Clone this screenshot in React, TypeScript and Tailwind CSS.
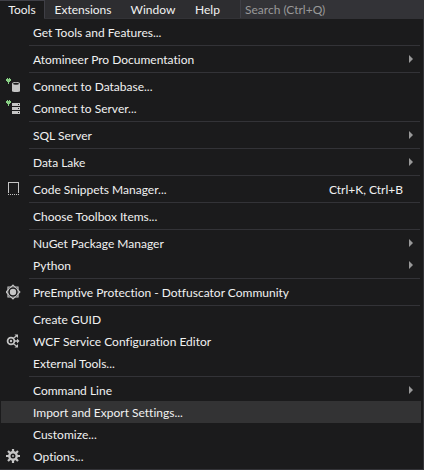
import type { ReactNode } from "react";

type Item = {
  label: string;
  icon?: ReactNode;
  shortcut?: string;
  submenu?: boolean;
  active?: boolean;
};

function PlugMark() {
  return (
    <path d="M1 0h1v1h1V0h1v1h1v2h-1v1h-1v2h-1V4h-1V3H0V1h1z" fill="#89d185" />
  );
}

function DatabaseIcon() {
  return (
    <svg width="16" height="16" viewBox="0 0 16 16" aria-hidden="true">
      <PlugMark />
      <path d="M6 5.500C6 4.600 7.500 4 10 4s4 .6 4 1.500V13c0 .6-1.500 1-4 1s-4-.4-4-1z" fill="#c5c5c5" />
      <ellipse cx="10" cy="5.800" rx="3" ry="1" fill="#1b1b1c" />
    </svg>
  );
}

function ServerIcon() {
  return (
    <svg width="16" height="16" viewBox="0 0 16 16" aria-hidden="true" shapeRendering="crispEdges">
      <PlugMark />
      <path d="M6 3h8v3H6zM6 7h8v3H6zM6 11h8v3H6z" fill="#c5c5c5" />
      <path d="M12 4h1v1h-1zM12 8h1v1h-1zM12 12h1v1h-1z" fill="#1b1b1c" />
    </svg>
  );
}

function SnippetIcon() {
  return (
    <svg width="16" height="16" viewBox="0 0 16 16" aria-hidden="true" shapeRendering="crispEdges">
      <path d="M2 12V1h11v11h-1V2H3v10z" fill="#c5c5c5" />
      <path d="M2 13h1v1H2zM4 13h1v1H4zM6 13h1v1H6zM8 13h1v1H8zM10 13h1v1h-1zM12 13h1v1h-1z" fill="#c5c5c5" />
    </svg>
  );
}

function DotfuscatorIcon() {
  return (
    <svg width="16" height="16" viewBox="0 0 16 16" fill="none" stroke="#c5c5c5" aria-hidden="true">
      <path d="M2 3h10v10H2z" strokeWidth="1.200" />
      <path d="M7 1.200L13.800 8 7 14.800.2 8z" strokeWidth="1.200" />
      <circle cx="7" cy="8" r="4.600" fill="#1b1b1c" stroke="none" />
      <circle cx="7" cy="8" r="3.200" fill="#c5c5c5" stroke="none" />
    </svg>
  );
}

function WcfIcon() {
  return (
    <svg width="16" height="16" viewBox="0 0 16 16" fill="none" stroke="#c5c5c5" aria-hidden="true">
      <circle cx="5" cy="8" r="3.400" strokeWidth="1.800" />
      <circle cx="5" cy="8" r="1.200" fill="#c5c5c5" stroke="none" />
      <path d="M8 8h4M7.500 5l3-2M7.500 11l3 2" strokeWidth="1.300" />
      <path d="M8.500 1.500H12V5zM8.500 14.500H12V11zM11 5.500L13.500 8 11 10.500z" fill="#c5c5c5" stroke="none" />
    </svg>
  );
}

function GearIcon() {
  return (
    <svg width="16" height="16" viewBox="0 0 16 16" fill="none" stroke="#c5c5c5" aria-hidden="true">
      <circle cx="7" cy="8" r="3.700" strokeWidth="2.400" />
      <circle cx="7" cy="8" r="0.900" fill="#c5c5c5" stroke="none" />
      <path
        d="M7 1v3M7 12v3M0 8h3M11 8h3M2 3l2 2M10 11l2 2M2 13l2-2M10 5l2-2"
        strokeWidth="2.200"
      />
    </svg>
  );
}

const groups: Item[][] = [
  [{ label: "Get Tools and Features..." }],
  [{ label: "Atomineer Pro Documentation", submenu: true }],
  [
    { label: "Connect to Database...", icon: <DatabaseIcon /> },
    { label: "Connect to Server...", icon: <ServerIcon /> },
  ],
  [{ label: "SQL Server", submenu: true }],
  [{ label: "Data Lake", submenu: true }],
  [{ label: "Code Snippets Manager...", icon: <SnippetIcon />, shortcut: "Ctrl+K, Ctrl+B" }],
  [{ label: "Choose Toolbox Items..." }],
  [
    { label: "NuGet Package Manager", submenu: true },
    { label: "Python", submenu: true },
  ],
  [{ label: "PreEmptive Protection - Dotfuscator Community", icon: <DotfuscatorIcon /> }],
  [
    { label: "Create GUID" },
    { label: "WCF Service Configuration Editor", icon: <WcfIcon /> },
    { label: "External Tools..." },
  ],
  [
    { label: "Command Line", submenu: true },
    { label: "Import and Export Settings...", active: true },
    { label: "Customize..." },
    { label: "Options...", icon: <GearIcon /> },
  ],
];

function MenuRow({ label, icon, shortcut, submenu, active }: Item) {
  return (
    <button
      type="button"
      role="menuitem"
      aria-haspopup={submenu ? "menu" : undefined}
      className={`flex h-[22px] w-full items-center pr-2 text-left ${active ? "bg-[#333334]" : "hover:bg-[#333334]"}`}
    >
      <span className="flex w-8 shrink-0 pl-[5px]">{icon}</span>
      <span className="grow pt-[2px] whitespace-nowrap">{label}</span>
      {shortcut && <span className="mr-[10px] pt-[2px] whitespace-nowrap">{shortcut}</span>}
      {submenu && (
        <svg width="4" height="8" viewBox="0 0 4 8" className="shrink-0" aria-hidden="true">
          <path d="M0 0l4 4-4 4z" fill="#999999" />
        </svg>
      )}
    </button>
  );
}

export default function App() {
  return (
    <div className="bg-[#1b1b1c] font-['Lato','Segoe_UI',sans-serif] text-xs text-[#f1f1f1] [font-variant-ligatures:none]">
      <nav className="flex h-[18px] bg-[#2d2d30]" aria-label="Main menu">
        <button type="button" className="w-[45px] border-t border-r border-[#3f3f46] bg-[#1b1b1c] pt-px">
          Tools
        </button>
        <button type="button" className="w-[76px] pt-[2px]">Extensions</button>
        <button type="button" className="w-16 pt-[2px]">Window</button>
        <button type="button" className="w-[45px] pt-[2px]">Help</button>
        <input
          type="search"
          aria-label="Search"
          placeholder="Search (Ctrl+Q)"
          className="ml-[10px] min-w-0 grow border-l border-[#3f3f46] bg-[#333337] pt-[2px] pl-1 outline-none placeholder:text-[#999999]"
        />
      </nav>
      <div role="menu" aria-label="Tools" className="border-r border-b border-[#333337] pb-[2px]">
        <div className="ml-11 h-px bg-[#333337]" />
        <div className="pt-[2px] pr-[2px] pl-px">
          {groups.map((items, index) => (
            <div key={items[0].label}>
              {index > 0 && <hr className="my-[2px] mr-px ml-7 border-[#333337]" />}
              {items.map((item) => (
                <MenuRow key={item.label} {...item} />
              ))}
            </div>
          ))}
        </div>
      </div>
    </div>
  );
}
